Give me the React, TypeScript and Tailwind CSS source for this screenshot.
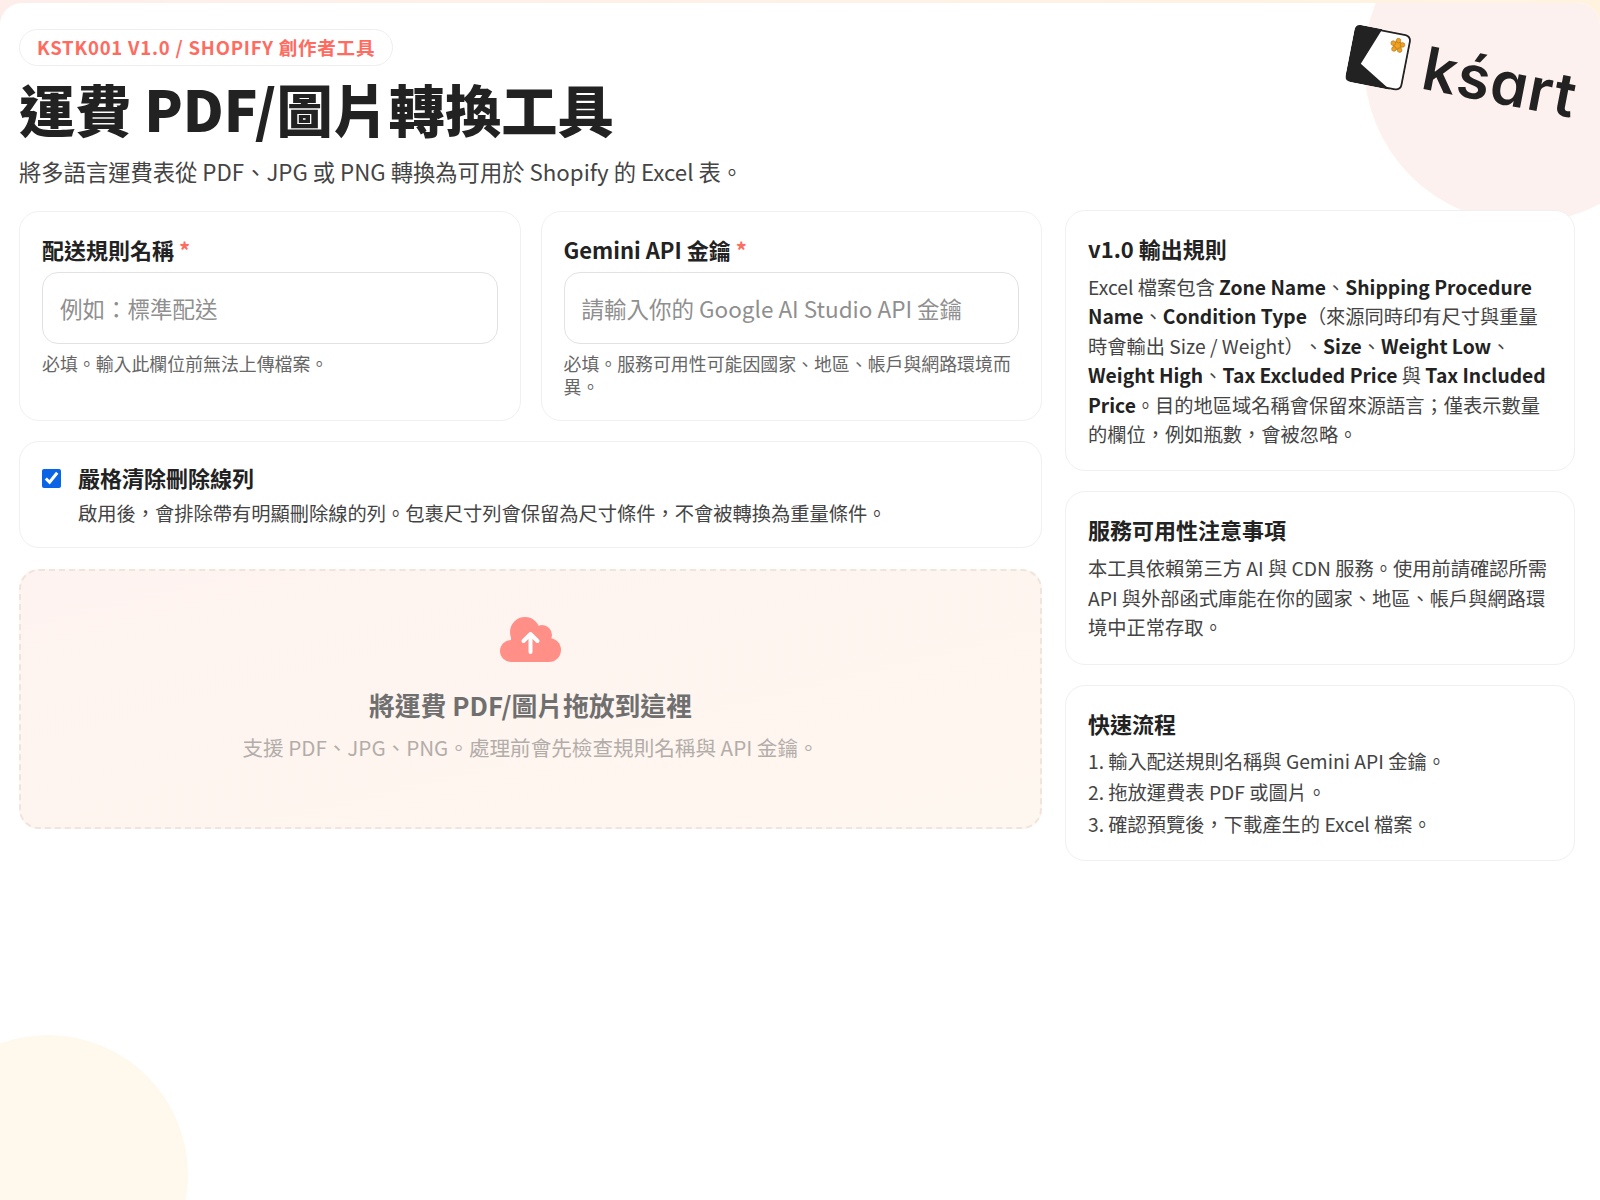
const Req = () => <span className="text-[#ff6b5f]"> *</span>;

function Logo() {
  return (
    <div className="absolute left-[1348px] top-[35px] w-[226px] h-[72px] flex items-center gap-[17px] rotate-[11deg]">
      <svg width="58" height="58" viewBox="0 0 64 64" className="shrink-0">
        <rect x="1.5" y="1.5" width="61" height="61" rx="6" fill="#fff" stroke="#222" strokeWidth="2" />
        <path d="M7 0H30L14 42L51 64H7Q0 64 0 57V7Q0 0 7 0Z" fill="#222" />
        <g fill="#f5a11f" stroke="#8a6a20" strokeWidth="0.5">
          <circle cx="50" cy="14.5" r="4.5" />
          <circle cx="50" cy="9" r="2.6" />
          <circle cx="55.2" cy="12.8" r="2.6" />
          <circle cx="53.2" cy="19" r="2.6" />
          <circle cx="46.8" cy="19" r="2.6" />
          <circle cx="44.8" cy="12.8" r="2.6" />
        </g>
      </svg>
      <span className="text-[60px] leading-none font-semibold text-[#222] tracking-[1px] font-['Inter',sans-serif] [font-feature-settings:'cv11']">kśart</span>
    </div>
  );
}

function UploadCloud() {
  return (
    <svg width="61" height="46" viewBox="0 0 61 46" className="mx-auto">
      <g fill="#ff8f87">
        <circle cx="11" cy="34" r="11" />
        <circle cx="49" cy="33" r="12" />
        <circle cx="25" cy="15" r="15" />
        <circle cx="42" cy="18" r="10" />
        <rect x="11" y="20" width="38" height="25" />
      </g>
      <path d="M30.5 35V18M23.5 24L30.5 17L37.5 24" fill="none" stroke="#fff" strokeWidth="4" strokeLinecap="round" strokeLinejoin="round" />
    </svg>
  );
}

function SideCard({ title, children }: { title: string; children: React.ReactNode }) {
  return (
    <div className="bg-white border border-[#f0f0f0] rounded-[20px] px-[22px] pt-[23px] pb-[21px]">
      <h3 className="text-[22px] leading-[28px] font-bold text-[#222] mb-[11px]">{title}</h3>
      {children}
    </div>
  );
}

export default function App() {
  return (
    <div className="relative min-h-[1200px] overflow-hidden bg-linear-to-r from-[#fdeeeb] to-[#fff3e0] font-['Noto_Sans_CJK_TC','Noto_Sans',sans-serif] text-[#222]">
      <div className="relative min-h-[1197px] mt-[3px] rounded-t-[22px] bg-white overflow-hidden px-[19px] pt-[26px]">
        <div className="absolute left-[1364px] top-[-100px] w-[320px] h-[320px] rounded-full bg-[#fdf1ef]" />
        <div className="absolute left-[-92px] top-[1032px] w-[280px] h-[280px] rounded-full bg-[#fff8ec]" />
        <Logo />

        <div className="relative">
          <span className="inline-block bg-white border border-[#eeeeee] rounded-full px-[17px] py-[4px] text-[18.5px] leading-[27px] font-bold tracking-[0.8px] text-[#ff6b5f]">
            KSTK001 V1.0 / SHOPIFY 創作者工具
          </span>
          <h1 className="text-[56.2px] leading-[80px] font-black text-[#222] mt-[2px]">運費 PDF/圖片轉換工具</h1>
          <p className="text-[22.3px] leading-[32px] text-[#444] mt-[7px]">將多語言運費表從 PDF、JPG 或 PNG 轉換為可用於 Shopify 的 Excel 表。</p>
        </div>

        <div className="relative grid grid-cols-[1023px_510px] gap-[23px] mt-[24px]">
          <div className="flex flex-col gap-[20px]">
            <div className="grid grid-cols-2 gap-[20px]">
              <div className="bg-white border border-[#f0f0f0] rounded-[20px] px-[22px] pt-[23px] pb-[22px]">
                <label className="block text-[22px] leading-[28px] font-bold">配送規則名稱<Req /></label>
                <input
                  placeholder="例如：標準配送"
                  className="mt-[9px] w-full h-[72px] border border-[#e2e2e2] rounded-[16px] px-[17px] text-[22.5px] bg-white outline-none placeholder:text-[#8f8f8f]"
                />
                <p className="mt-[8px] text-[17.9px] leading-[23px] text-[#666]">必填。輸入此欄位前無法上傳檔案。</p>
              </div>
              <div className="bg-white border border-[#f0f0f0] rounded-[20px] px-[22px] pt-[23px] pb-[22px]">
                <label className="block text-[22px] leading-[28px] font-bold">Gemini API 金鑰<Req /></label>
                <input
                  placeholder="請輸入你的 Google AI Studio API 金鑰"
                  className="mt-[9px] w-full h-[72px] border border-[#e2e2e2] rounded-[16px] px-[17px] text-[22.5px] bg-white outline-none placeholder:text-[#8f8f8f]"
                />
                <p className="mt-[8px] text-[17.9px] leading-[23px] text-[#666]">必填。服務可用性可能因國家、地區、帳戶與網路環境而異。</p>
              </div>
            </div>

            <div className="bg-white border border-[#f0f0f0] rounded-[20px] px-[22px] pt-[20px] pb-[17px] flex gap-[17px]">
              <input type="checkbox" defaultChecked className="w-[19px] h-[19px] mt-[7px] accent-[#0b63e5] shrink-0" />
              <div>
                <div className="text-[22px] leading-[30px] font-bold">嚴格清除刪除線列</div>
                <p className="mt-[4px] text-[19.25px] leading-[34px] text-[#444]">啟用後，會排除帶有明顯刪除線的列。包裹尺寸列會保留為尺寸條件，不會被轉換為重量條件。</p>
              </div>
            </div>

            <div className="mt-[1px] h-[260px] rounded-[20px] border-2 border-dashed border-[#efe5dc] bg-linear-to-br from-[#fef3f0] to-[#fef7ef] flex flex-col items-center pt-[46px]">
              <UploadCloud />
              <div className="text-[25.8px] leading-[36px] font-bold text-[#6f6f6f] mt-[24px]">將運費 PDF/圖片拖放到這裡</div>
              <p className="text-[20.6px] leading-[30px] text-[#b3adaa] mt-[9px]">支援 PDF、JPG、PNG。處理前會先檢查規則名稱與 API 金鑰。</p>
            </div>
          </div>

          <div className="flex flex-col gap-[20px] -mt-[1px]">
            <SideCard title="v1.0 輸出規則">
              <p className="text-[19.25px] leading-[29.4px] text-[#444] [text-spacing-trim:space-all]">
                Excel 檔案包含 <b className="text-[#222]">Zone Name</b>、<b className="text-[#222]">Shipping Procedure Name</b>、<b className="text-[#222]">Condition Type</b>（來源同時印有尺寸與重量時會輸出 Size / Weight）、<b className="text-[#222]">Size</b>、<b className="text-[#222]">Weight Low</b>、<b className="text-[#222]">Weight High</b>、<b className="text-[#222]">Tax Excluded Price</b> 與 <b className="text-[#222]">Tax Included Price</b>。目的地區域名稱會保留來源語言；僅表示數量的欄位，例如瓶數，會被忽略。
              </p>
            </SideCard>
            <SideCard title="服務可用性注意事項">
              <p className="text-[19.25px] leading-[29.5px] text-[#444]">本工具依賴第三方 AI 與 CDN 服務。使用前請確認所需 API 與外部函式庫能在你的國家、地區、帳戶與網路環境中正常存取。</p>
            </SideCard>
            <SideCard title="快速流程">
              <ol className="-mt-[2px] -mb-[1px] text-[19.25px] leading-[31.5px] text-[#444]">
                <li>1. 輸入配送規則名稱與 Gemini API 金鑰。</li>
                <li>2. 拖放運費表 PDF 或圖片。</li>
                <li>3. 確認預覽後，下載產生的 Excel 檔案。</li>
              </ol>
            </SideCard>
          </div>
        </div>
      </div>
    </div>
  );
}
